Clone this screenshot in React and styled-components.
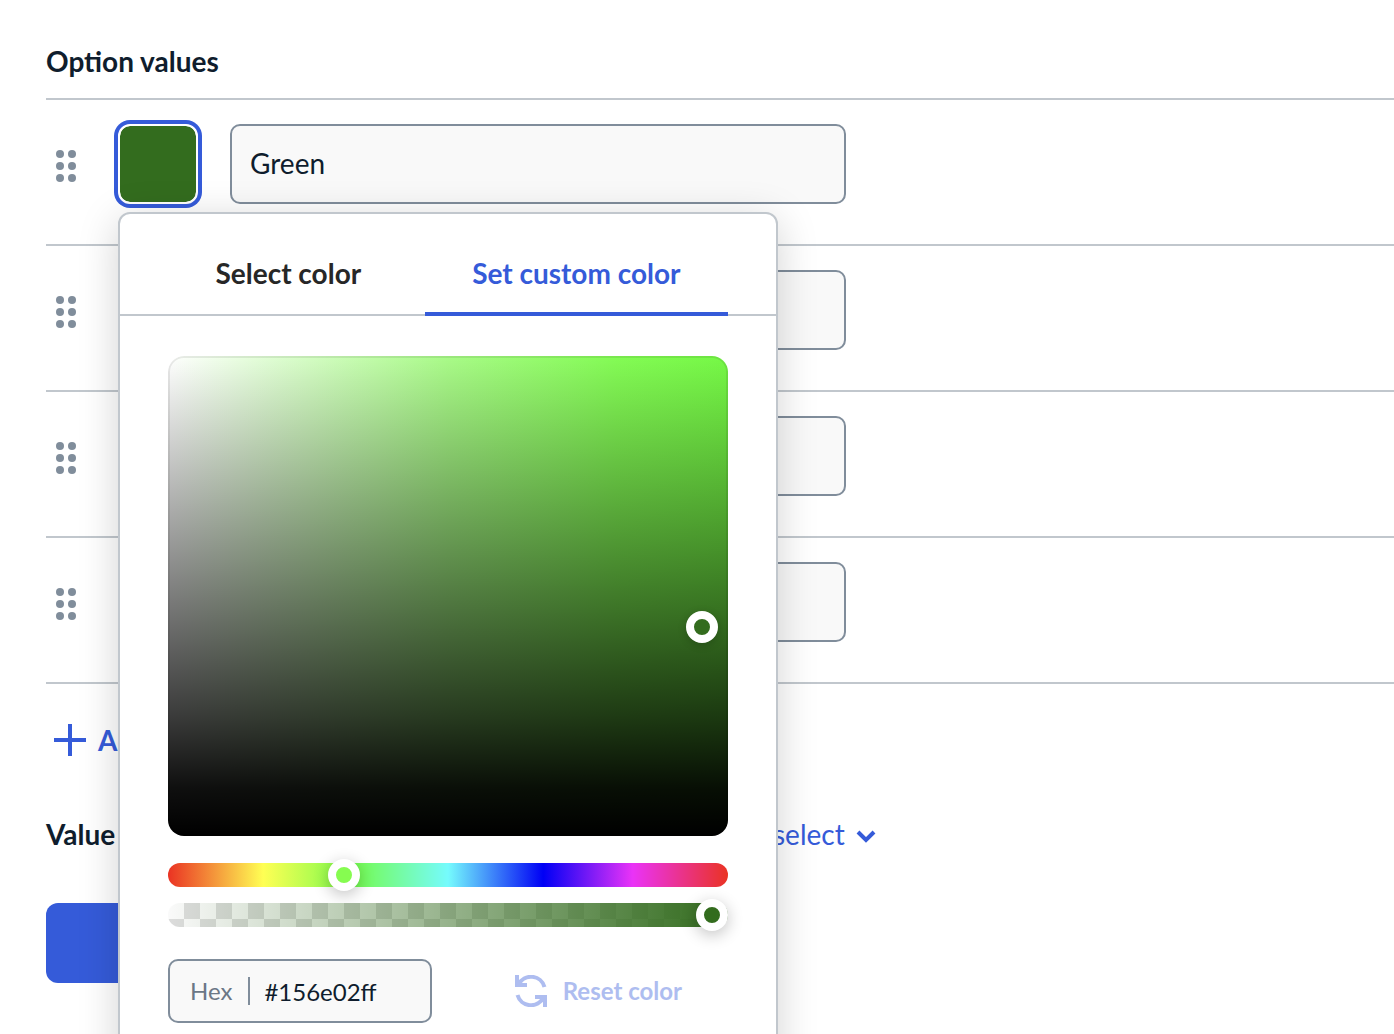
import React, { useState } from "react";
import styled, { createGlobalStyle } from "styled-components";

const ink = "#0f1d2d";
const blue = "#355bd9";
const line = "#c1c7cd";
const edge = "#808d9b";
const muted = "#6b7786";
const green = "#336c1e";

const GlobalStyle = createGlobalStyle`
  *, *::before, *::after { box-sizing: border-box; }
  body { margin: 0; background: #fff; }
  button, input, select { font: inherit; color: inherit; margin: 0; }
  button { border: 0; padding: 0; background: none; cursor: pointer; }
`;

const Page = styled.main`
  height: 100vh;
  overflow: hidden;
  padding: 44px 0 0 46px;
  font-family: Lato, "Liberation Sans", sans-serif;
  font-size: 28px;
  line-height: 34px;
  color: ${ink};
`;

const Heading = styled.h2`
  margin: 0;
  padding-bottom: 20px;
  font-size: 28px;
  font-weight: 700;
`;

const Rows = styled.ul`
  list-style: none;
  margin: 0 0 32px;
  padding: 0;
  border-bottom: 2px solid ${line};
`;

const Row = styled.li`
  display: flex;
  align-items: center;
  gap: 32px;
  padding: 24px 0 40px;
  border-top: 2px solid ${line};
`;

const Handle = styled.button`
  display: flex;
  width: 40px;
  height: 40px;
  color: ${edge};
`;

const SwatchWrap = styled.div`
  position: relative;
  flex: none;
`;

const Swatch = styled.button`
  display: block;
  width: 80px;
  height: 80px;
  border: 2px solid #fff;
  border-radius: 12px;
  background: ${(p) => p.$color} padding-box;
  box-shadow: ${(p) => (p.$active ? `0 0 0 4px ${blue}` : "none")};
`;

const NameInput = styled.input`
  flex: 0 1 616px;
  min-width: 0;
  height: 80px;
  padding: 0 18px 2px;
  border: 2px solid ${edge};
  border-radius: 10px;
  background: #f9f9f9;
`;

const AddButton = styled.button`
  display: flex;
  align-items: center;
  gap: 12px;
  height: 48px;
  padding-left: 8px;
  color: ${blue};
  font-weight: 700;
`;

const DisplayRow = styled.div`
  display: flex;
  align-items: center;
  justify-content: space-between;
  max-width: 831px;
  margin: 47px 0 46px;
`;

const DisplayLabel = styled.label`
  font-weight: 700;
`;

const SelectBox = styled.span`
  display: grid;
  grid-template-columns: auto 24px;
  align-items: center;
  gap: 8px;
  color: ${blue};
`;

const PlainSelect = styled.select`
  appearance: none;
  border: 0;
  padding: 0;
  background: none;
  height: 46px;
`;

const SaveButton = styled.button`
  width: 240px;
  height: 80px;
  border-radius: 12px;
  background: ${blue};
  color: #fff;
  font-weight: 700;
`;

const Popover = styled.section`
  position: absolute;
  z-index: 2;
  top: 88px;
  left: 0;
  width: 660px;
  border: 2px solid ${line};
  border-radius: 12px;
  background: #fff;
  box-shadow: 0 8px 40px rgba(0, 0, 0, 0.18);
`;

const Tabs = styled.div`
  display: flex;
  gap: 16px;
  height: 102px;
  padding: 0 48px;
  box-shadow: inset 0 -2px 0 ${line};
`;

const Tab = styled.button`
  flex: 1 1 auto;
  padding-top: 20px;
  border-bottom: 4px solid ${(p) => (p.$selected ? blue : "transparent")};
  color: ${(p) => (p.$selected ? blue : "#272727")};
  font-weight: 700;
`;

const Panel = styled.div`
  display: flex;
  flex-direction: column;
  padding: 40px 48px 48px;
`;

const Saturation = styled.div`
  position: relative;
  height: 480px;
  margin-bottom: 27px;
  border-radius: 16px;
  background:
    linear-gradient(to top, #000, rgba(0, 0, 0, 0.94) 10%, rgba(0, 0, 0, 0.77) 25%, transparent),
    linear-gradient(to right, #fff, #a9fb88 50%, #84fc55 80%, #76f946);
  box-shadow: inset 0 0 0 2px rgba(0, 0, 0, 0.08);
`;

const Marker = styled.button`
  position: absolute;
  width: 32px;
  height: 32px;
  transform: translate(-50%, -50%);
  border: 8px solid #fff;
  border-radius: 50%;
  background: ${green};
  box-shadow: 0 2px 8px rgba(0, 0, 0, 0.2);
`;

const Slider = styled.input`
  appearance: none;
  display: block;
  width: 100%;
  height: 24px;
  margin: 0 0 16px;
  border-radius: 12px;
  background: ${(p) => p.$track};

  &::-webkit-slider-thumb {
    appearance: none;
    width: 32px;
    height: 32px;
    border: 8px solid #fff;
    border-radius: 50%;
    background: ${(p) => p.$thumb};
    box-shadow: 0 4px 16px rgba(0, 0, 0, 0.24);
  }
`;

const Footer = styled.div`
  display: flex;
  align-items: center;
  justify-content: space-between;
  margin-top: 16px;
  padding-right: 46px;
  font-size: 24px;
`;

const HexField = styled.label`
  display: flex;
  align-items: center;
  width: 264px;
  height: 64px;
  padding: 0 20px;
  border: 2px solid ${edge};
  border-radius: 10px;
  background: #f9f9f9;
`;

const HexLabel = styled.span`
  padding-right: 16px;
  border-right: 2px solid ${edge};
  line-height: 28px;
  color: ${muted};
`;

const HexInput = styled.input`
  flex: 1;
  min-width: 0;
  padding: 2px 0 0 14px;
  border: 0;
  background: none;
`;

const ResetButton = styled.button`
  display: flex;
  align-items: center;
  gap: 16px;
  color: #aebdf0;
  font-weight: 700;
`;

const hueTrack =
  "linear-gradient(to right, #ea3323 0%, #ffff54 17%, #75fb4c 33%, #75fbfd 50%, #0000f5 67%, #ea33f7 83%, #ea3323 100%)";
const alphaTrack =
  "linear-gradient(to right, transparent, #336c1e), repeating-conic-gradient(#dcdcdc 0 25%, #fafafa 0 50%) 0 0 / 32px 32px";

function GripIcon() {
  return (
    <svg width="40" height="40" viewBox="0 0 40 40" fill="currentColor" aria-hidden="true">
      {[10, 22, 34].map((y) => (
        <React.Fragment key={y}>
          <circle cx="14" cy={y} r="4" />
          <circle cx="26" cy={y} r="4" />
        </React.Fragment>
      ))}
    </svg>
  );
}

function PlusIcon() {
  return (
    <svg width="32" height="32" viewBox="0 0 32 32" stroke="currentColor" strokeWidth="4" aria-hidden="true">
      <path d="M16 0V32M0 16H32" />
    </svg>
  );
}

function ChevronIcon() {
  return (
    <svg width="24" height="24" viewBox="0 0 24 24" fill="none" stroke="currentColor" strokeWidth="4" aria-hidden="true">
      <path d="M5 10L13 18L21 10" />
    </svg>
  );
}

function ResetIcon() {
  return (
    <svg width="32" height="32" viewBox="0 0 32 32" fill="none" stroke="currentColor" strokeWidth="4" aria-hidden="true">
      <path d="M2 0V10H12M29.5 12A14 14 0 0 0 3.5 9.5" />
      <path d="M30 32V22H20M2.5 20A14 14 0 0 0 28.5 22.5" />
    </svg>
  );
}

function ColorPopover() {
  const [hue, setHue] = useState(109);
  const [alpha, setAlpha] = useState(100);
  const [hex, setHex] = useState("#156e02ff");
  return (
    <Popover>
      <Tabs role="tablist">
        <Tab role="tab" aria-selected="false">Select color</Tab>
        <Tab role="tab" aria-selected="true" $selected>Set custom color</Tab>
      </Tabs>
      <Panel role="tabpanel">
        <Saturation>
          <Marker aria-label="Saturation and brightness" style={{ left: "95.4%", top: "56.4%" }} />
        </Saturation>
        <Slider
          type="range" min="0" max="360" value={hue} aria-label="Hue"
          onChange={(e) => setHue(e.target.value)} $track={hueTrack} $thumb="#86fc50"
        />
        <Slider
          type="range" min="0" max="100" value={alpha} aria-label="Opacity"
          onChange={(e) => setAlpha(e.target.value)} $track={alphaTrack} $thumb={green}
        />
        <Footer>
          <HexField>
            <HexLabel>Hex</HexLabel>
            <HexInput value={hex} onChange={(e) => setHex(e.target.value)} />
          </HexField>
          <ResetButton>
            <ResetIcon />
            Reset color
          </ResetButton>
        </Footer>
      </Panel>
    </Popover>
  );
}

const options = [
  { id: 1, name: "Green", color: green, open: true },
  { id: 2, name: "", color: "#d9dde2" },
  { id: 3, name: "", color: "#d9dde2" },
  { id: 4, name: "", color: "#d9dde2" },
];

export default function App() {
  return (
    <Page>
      <GlobalStyle />
      <Heading>Option values</Heading>
      <Rows>
        {options.map((o) => (
          <Row key={o.id}>
            <Handle aria-label="Reorder"><GripIcon /></Handle>
            <SwatchWrap>
              <Swatch aria-label="Color" $color={o.color} $active={o.open} />
              {o.open && <ColorPopover />}
            </SwatchWrap>
            <NameInput aria-label="Value name" defaultValue={o.name} />
          </Row>
        ))}
      </Rows>
      <AddButton>
        <PlusIcon />
        Add
      </AddButton>
      <DisplayRow>
        <DisplayLabel htmlFor="display">Value</DisplayLabel>
        <SelectBox>
          <PlainSelect id="display"><option>select</option></PlainSelect>
          <ChevronIcon />
        </SelectBox>
      </DisplayRow>
      <SaveButton>Save</SaveButton>
    </Page>
  );
}
